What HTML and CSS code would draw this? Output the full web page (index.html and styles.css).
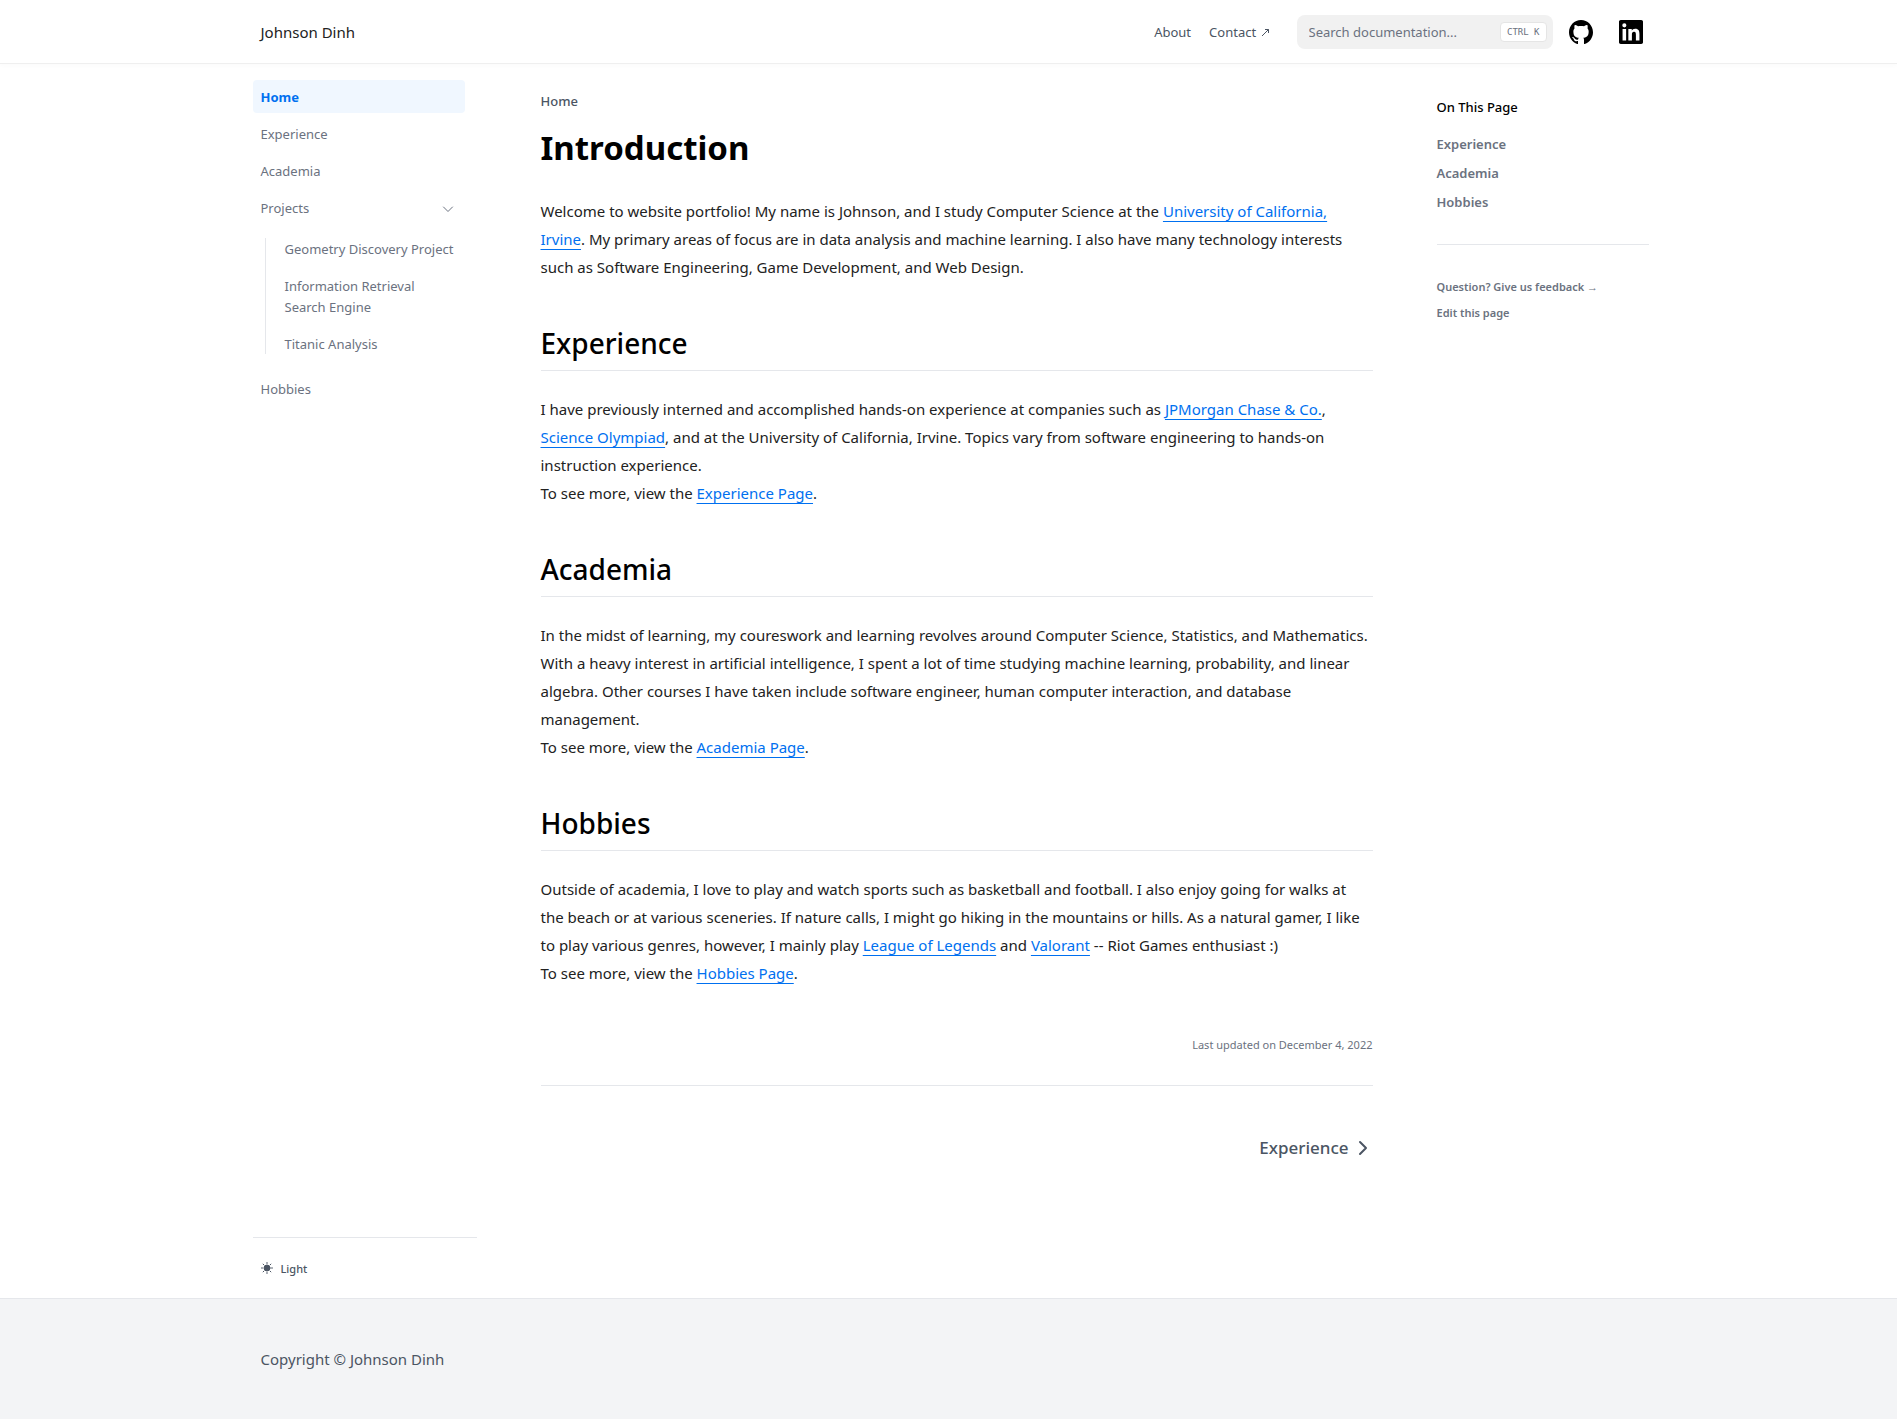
FILE: index.html
```html
<!DOCTYPE html>
<html lang="en">
<head>
<meta charset="utf-8">
<meta name="viewport" content="width=device-width, initial-scale=1">
<title>Introduction – Johnson Dinh</title>
<link rel="stylesheet" href="styles.css">
</head>
<body>
<header class="navbar">
  <nav class="container navbar-inner" aria-label="Main">
    <a class="brand" href="#">Johnson Dinh</a>
    <a class="nav-link" href="#about">About</a>
    <a class="nav-link" href="#contact">Contact <svg class="arrow-out" viewBox="0 0 9 9" aria-hidden="true"><path d="M1 8 7.5 1.5M4 1.500H7.500v3.500"/></svg></a>
    <div class="search">
      <input class="search-input" type="search" placeholder="Search documentation..." aria-label="Search documentation">
      <kbd class="search-key">CTRL K</kbd>
    </div>
    <a class="icon-link" href="#github" aria-label="GitHub">
      <svg viewBox="3 3 18 18" aria-hidden="true"><path d="M12 3C7.0275 3 3 7.12937 3 12.2276C3 16.3109 5.57625 19.7597 9.15374 20.9824C9.60374 21.0631 9.77249 20.7863 9.77249 20.5441C9.77249 20.3249 9.76125 19.5982 9.76125 18.8254C7.5 19.2522 6.915 18.2602 6.735 17.7412C6.63375 17.4759 6.19499 16.6569 5.8125 16.4378C5.4975 16.2647 5.0475 15.838 5.80124 15.8264C6.51 15.8149 7.01625 16.4954 7.18499 16.7723C7.99499 18.1679 9.28875 17.7758 9.80625 17.5335C9.885 16.9337 10.1212 16.53 10.38 16.2993C8.3775 16.0687 6.285 15.2728 6.285 11.7432C6.285 10.7397 6.63375 9.9092 7.20749 9.26326C7.1175 9.03257 6.8025 8.08674 7.2975 6.81794C7.2975 6.81794 8.05125 6.57571 9.77249 7.76377C10.4925 7.55615 11.2575 7.45234 12.0225 7.45234C12.7875 7.45234 13.5525 7.55615 14.2725 7.76377C15.9937 6.56418 16.7475 6.81794 16.7475 6.81794C17.2424 8.08674 16.9275 9.03257 16.8375 9.26326C17.4113 9.9092 17.76 10.7281 17.76 11.7432C17.76 15.2843 15.6563 16.0687 13.6537 16.2993C13.98 16.5877 14.2613 17.1414 14.2613 18.0065C14.2613 19.2407 14.25 20.2326 14.25 20.5441C14.25 20.7863 14.4188 21.0746 14.8688 20.9824C16.6554 20.364 18.2079 19.1866 19.3078 17.6162C20.4077 16.0457 20.9995 14.1611 21 12.2276C21 7.12937 16.9725 3 12 3Z"/></svg>
    </a>
    <a class="icon-link" href="#linkedin" aria-label="LinkedIn">
      <svg viewBox="0 0 24 24" aria-hidden="true"><path d="M20.447 20.452h-3.554v-5.569c0-1.328-.027-3.037-1.852-3.037-1.853 0-2.136 1.445-2.136 2.939v5.667H9.351V9h3.414v1.561h.046c.477-.9 1.637-1.85 3.37-1.85 3.601 0 4.267 2.37 4.267 5.455v6.286zM5.337 7.433a2.062 2.062 0 0 1-2.063-2.065 2.064 2.064 0 1 1 2.063 2.065zm1.782 13.019H3.555V9h3.564v11.452zM22.225 0H1.771C.792 0 0 .774 0 1.729v20.542C0 23.227.792 24 1.771 24h20.451C23.2 24 24 23.227 24 22.271V1.729C24 .774 23.2 0 22.222 0h.003z"/></svg>
    </a>
  </nav>
</header>

<div class="container page">
  <aside class="sidebar">
    <ul class="menu">
      <li><a class="menu-item active" href="#" aria-current="page">Home</a></li>
      <li><a class="menu-item" href="#experience-page">Experience</a></li>
      <li><a class="menu-item" href="#academia-page">Academia</a></li>
      <li>
        <button class="menu-item menu-toggle" type="button" aria-expanded="true">Projects
          <svg viewBox="0 0 18 18" aria-hidden="true"><path d="m4.5 7 4.5 4.5L13.500 7"/></svg>
        </button>
        <ul class="menu submenu">
          <li><a class="menu-item" href="#geometry">Geometry Discovery Project</a></li>
          <li><a class="menu-item" href="#search-engine">Information Retrieval Search Engine</a></li>
          <li><a class="menu-item" href="#titanic">Titanic Analysis</a></li>
        </ul>
      </li>
      <li><a class="menu-item" href="#hobbies-page">Hobbies</a></li>
    </ul>
    <div class="sidebar-footer">
      <button class="theme" type="button">
        <svg viewBox="0 0 24 24" aria-hidden="true"><circle cx="12" cy="12" r="6"/><path d="M12 1v2M12 21v2M4.200 4.200l1.500 1.500M18.300 18.300l1.500 1.500M1 12h2M21 12h2M4.200 19.800l1.500-1.500M18.300 5.700l1.500-1.500"/></svg>
        Light
      </button>
    </div>
  </aside>

  <main class="article">
    <div class="breadcrumb">Home</div>
    <h1>Introduction</h1>
    <p>Welcome to website portfolio! My name is Johnson, and I study Computer Science at the <a href="#uci">University of California, Irvine</a>. My primary areas of focus are in data analysis and machine learning. I also have many technology interests such as Software Engineering, Game Development, and Web Design.</p>
    <h2 id="experience">Experience</h2>
    <p>I have previously interned and accomplished hands-on experience at companies such as <a href="#jpmc">JPMorgan Chase &amp; Co.</a>, <a href="#scioly">Science Olympiad</a>, and at the University of California, Irvine. Topics vary from software engineering to hands-on instruction experience.<br>To see more, view the <a href="#experience-page">Experience Page</a>.</p>
    <h2 id="academia">Academia</h2>
    <p>In the midst of learning, my coureswork and learning revolves around Computer Science, Statistics, and Mathematics. With a heavy interest in artificial intelligence, I spent a lot of time studying machine learning, probability, and linear algebra. Other courses I have taken include software engineer, human computer interaction, and database management.<br>To see more, view the <a href="#academia-page">Academia Page</a>.</p>
    <h2 id="hobbies">Hobbies</h2>
    <p>Outside of academia, I love to play and watch sports such as basketball and football. I also enjoy going for walks at the beach or at various sceneries. If nature calls, I might go hiking in the mountains or hills. As a natural gamer, I like to play various genres, however, I mainly play <a href="#lol">League of Legends</a> and <a href="#valorant">Valorant</a> -- Riot Games enthusiast :)<br>To see more, view the <a href="#hobbies-page">Hobbies Page</a>.</p>
    <div class="updated">Last updated on <time datetime="2022-12-04">December 4, 2022</time></div>
    <nav class="pager" aria-label="Pagination">
      <a href="#experience-page">Experience
        <svg viewBox="0 0 20 20" aria-hidden="true"><path d="m7 4 6 6-6 6"/></svg>
      </a>
    </nav>
  </main>

  <aside class="toc">
    <p class="toc-title">On This Page</p>
    <ul class="toc-list">
      <li><a href="#experience">Experience</a></li>
      <li><a href="#academia">Academia</a></li>
      <li><a href="#hobbies">Hobbies</a></li>
    </ul>
    <div class="toc-extra">
      <a href="#feedback">Question? Give us feedback →</a>
      <a href="#edit">Edit this page</a>
    </div>
  </aside>
</div>

<footer class="footer">
  <div class="container footer-inner">Copyright © Johnson Dinh</div>
</footer>
</body>
</html>
```
FILE: styles.css
```css
:root {
  --blue: #0070f0;
  --gray-500: #6b7280;
  --gray-600: #4b5563;
  --line: #e5e7eb;
}

*, *::before, *::after { box-sizing: border-box; }

body {
  margin: 0;
  min-height: 100vh;
  display: flex;
  flex-direction: column;
  background: #fff;
  color: #222;
  font: 15px/28px "Noto Sans", sans-serif;
}

a { color: inherit; text-decoration: none; }
ul { list-style: none; margin: 0; padding: 0; }
button { border: 0; background: none; padding: 0; font: inherit; color: inherit; cursor: pointer; }

.container {
  width: 100%;
  max-width: 1440px;
  margin: 0 auto;
  padding: 0 20px 0 24px;
}

/* Top bar */
.navbar { border-bottom: 1px solid #efefef; box-shadow: 0 2px 4px rgba(0, 0, 0, .02); }
.navbar-inner { display: flex; align-items: center; height: 63px; padding-right: 26px; padding-left: 32px; }
.brand { margin-right: auto; }
.nav-link { margin-right: 18px; font-size: 13px; color: var(--gray-600); }
.arrow-out { width: 9px; height: 9px; margin-left: 1px; fill: none; stroke: currentColor; }
.search { position: relative; width: 256px; margin: 0 16px 0 9px; }
.search-input {
  display: block;
  width: 100%;
  height: 34px;
  padding: 0 60px 0 12px;
  border: 0;
  border-radius: 8px;
  background: #f1f1f1;
  font: inherit;
  font-size: 13px;
  color: var(--gray-600);
}
.search-input::placeholder { color: var(--gray-500); opacity: 1; }
.search-key {
  position: absolute;
  top: 7px;
  right: 6px;
  height: 20px;
  padding: 0 6px;
  border: 1px solid #e5e5e5;
  border-radius: 4px;
  background: #fff;
  font: 9px/18px "DejaVu Sans Mono", monospace;
  color: var(--gray-500);
}
.icon-link { display: flex; color: #000; }
.icon-link + .icon-link { margin-left: 26px; }
.icon-link svg { width: 24px; height: 24px; fill: currentColor; }

/* Three-column body */
.page { display: flex; flex: 1; }

.sidebar {
  display: flex;
  flex-direction: column;
  justify-content: space-between;
  flex: 0 0 224px;
  padding-top: 16px;
  font-size: 13px;
  line-height: 21px;
  color: var(--gray-500);
}
.menu { display: flex; flex-direction: column; gap: 4px; }
.sidebar > .menu { padding-right: 12px; }
.menu-item { display: block; width: 100%; padding: 7px 8px 5px; border-radius: 4px; text-align: left; }
.menu-item.active { background: #f0f7ff; color: var(--blue); font-weight: 700; }
.menu-toggle { display: flex; align-items: center; justify-content: space-between; }
.menu-toggle svg { width: 18px; height: 18px; fill: none; stroke: currentColor; stroke-linecap: round; stroke-linejoin: round; }
.submenu { position: relative; margin: 8px 0 8px 12px; padding-left: 12px; }
.submenu::before { content: ""; position: absolute; top: 6px; bottom: 6px; left: 0; border-left: 1px solid var(--line); }

.sidebar-footer { padding: 16px 8px; border-top: 1px solid var(--line); }
.theme { display: flex; align-items: center; gap: 8px; height: 28px; font-size: 11px; font-weight: 500; color: var(--gray-600); }
.theme svg { width: 12px; height: 12px; fill: currentColor; stroke: currentColor; stroke-width: 2; stroke-linecap: round; }

.article { flex: 1; min-width: 0; padding: 26px 64px 32px; }
.article p { margin: 24px 0 0; }
.article p a { color: var(--blue); text-decoration: underline; text-decoration-thickness: 1px; text-underline-offset: 4px; }
.breadcrumb { height: 20px; font-size: 13px; line-height: 22px; font-weight: 500; color: var(--gray-600); }
h1 { margin: 15px 0 0; padding-bottom: 3px; font-size: 33px; line-height: 45px; font-weight: 700; color: #000; }
h2 { margin: 40px 0 0; padding-bottom: 4px; border-bottom: 1px solid var(--line); font-size: 28px; line-height: 45px; font-weight: 500; color: #000; }
.updated { margin-top: 48px; font-size: 11px; line-height: 20px; text-align: right; color: var(--gray-500); }
.pager { display: flex; justify-content: flex-end; margin-top: 30px; padding-top: 48px; border-top: 1px solid var(--line); }
.pager a { display: flex; align-items: center; gap: 4px; font-size: 17px; font-weight: 500; color: var(--gray-600); }
.pager svg { width: 20px; height: 20px; fill: none; stroke: currentColor; stroke-width: 2; stroke-linecap: round; stroke-linejoin: round; }

.toc { flex: 0 0 212px; padding-top: 33px; font-size: 13px; line-height: 21px; font-weight: 500; color: var(--gray-500); }
.toc-title { margin: 0 0 16px; color: #000; }
.toc-list { display: flex; flex-direction: column; gap: 8px; font-weight: 600; }
.toc-extra { display: flex; flex-direction: column; gap: 6px; margin-top: 31px; padding-top: 32px; border-top: 1px solid var(--line); font-size: 11px; line-height: 20px; font-weight: 600; }

.footer { border-top: 1px solid var(--line); background: #f3f4f6; color: var(--gray-600); }
.footer-inner { padding: 48px 32px; line-height: 24px; }
```
